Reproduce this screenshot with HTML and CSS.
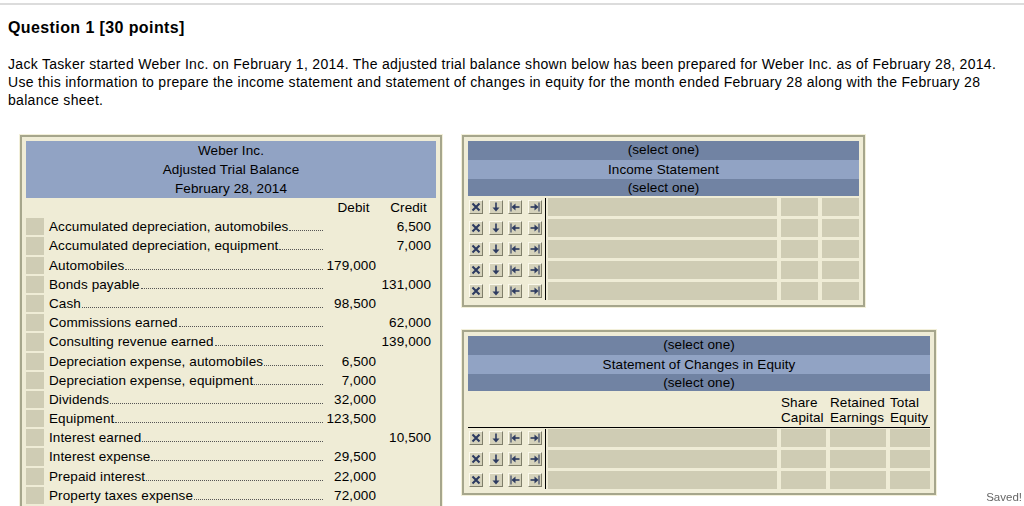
FILE: index.html
```html
<!DOCTYPE html>
<html lang="en">
<head>
<meta charset="utf-8">
<title>Question 1</title>
<link rel="stylesheet" href="styles.css">
</head>
<body>
<div class="topline"></div>
<main class="page">
  <h1 class="title">Question 1 [30 points]</h1>
  <p class="intro">Jack Tasker started Weber Inc. on February 1, 2014. The adjusted trial balance shown below has been prepared for Weber Inc. as of February 28, 2014. Use this information to prepare the income statement and statement of changes in equity for the month ended February 28 along with the February 28 balance sheet.</p>

  <div class="work">
    <section class="panel tb">
      <div class="tb-head">
        <div>Weber Inc.</div>
        <div>Adjusted Trial Balance</div>
        <div>February 28, 2014</div>
      </div>
      <div class="tb-grid">
        <div></div><div></div><div class="colh">Debit</div><div class="colh">Credit</div>

        <div class="box"></div><div class="lbl"><span>Accumulated depreciation, automobiles</span><span class="dots"></span></div><div class="num"></div><div class="num">6,500</div>
        <div class="box"></div><div class="lbl"><span>Accumulated depreciation, equipment</span><span class="dots"></span></div><div class="num"></div><div class="num">7,000</div>
        <div class="box"></div><div class="lbl"><span>Automobiles</span><span class="dots"></span></div><div class="num">179,000</div><div class="num"></div>
        <div class="box"></div><div class="lbl"><span>Bonds payable</span><span class="dots"></span></div><div class="num"></div><div class="num">131,000</div>
        <div class="box"></div><div class="lbl"><span>Cash</span><span class="dots"></span></div><div class="num">98,500</div><div class="num"></div>
        <div class="box"></div><div class="lbl"><span>Commissions earned</span><span class="dots"></span></div><div class="num"></div><div class="num">62,000</div>
        <div class="box"></div><div class="lbl"><span>Consulting revenue earned</span><span class="dots"></span></div><div class="num"></div><div class="num">139,000</div>
        <div class="box"></div><div class="lbl"><span>Depreciation expense, automobiles</span><span class="dots"></span></div><div class="num">6,500</div><div class="num"></div>
        <div class="box"></div><div class="lbl"><span>Depreciation expense, equipment</span><span class="dots"></span></div><div class="num">7,000</div><div class="num"></div>
        <div class="box"></div><div class="lbl"><span>Dividends</span><span class="dots"></span></div><div class="num">32,000</div><div class="num"></div>
        <div class="box"></div><div class="lbl"><span>Equipment</span><span class="dots"></span></div><div class="num">123,500</div><div class="num"></div>
        <div class="box"></div><div class="lbl"><span>Interest earned</span><span class="dots"></span></div><div class="num"></div><div class="num">10,500</div>
        <div class="box"></div><div class="lbl"><span>Interest expense</span><span class="dots"></span></div><div class="num">29,500</div><div class="num"></div>
        <div class="box"></div><div class="lbl"><span>Prepaid interest</span><span class="dots"></span></div><div class="num">22,000</div><div class="num"></div>
        <div class="box"></div><div class="lbl"><span>Property taxes expense</span><span class="dots"></span></div><div class="num">72,000</div><div class="num"></div>
      </div>
    </section>

    <div class="rightcol">
      <section class="panel is">
        <div class="sel">(select one)</div>
        <div class="ttl">Income Statement</div>
        <div class="sel last">(select one)</div>
        <div class="ent">
          <div class="btns">
            <div class="brow"><span class="b"><svg viewBox="0 0 12 12"><path d="M2.5 2.5L9.5 9.5M9.5 2.5L2.5 9.5" class="ln x"/></svg></span><span class="b"><svg viewBox="0 0 12 12"><path d="M6 1.5V7" class="ln"/><path d="M2.5 6.5H9.5L6 10.5Z" class="fl"/></svg></span><span class="b"><svg viewBox="0 0 12 12"><path d="M2 1.5V10.5" class="ln bar"/><path d="M6 6H10.5" class="ln"/><path d="M2.5 6L6.5 2.5V9.5Z" class="fl"/></svg></span><span class="b"><svg viewBox="0 0 12 12"><path d="M10 1.5V10.5" class="ln bar"/><path d="M1.5 6H6" class="ln"/><path d="M9.5 6L5.5 2.5V9.5Z" class="fl"/></svg></span></div>
            <div class="brow"><span class="b"><svg viewBox="0 0 12 12"><path d="M2.5 2.5L9.5 9.5M9.5 2.5L2.5 9.5" class="ln x"/></svg></span><span class="b"><svg viewBox="0 0 12 12"><path d="M6 1.5V7" class="ln"/><path d="M2.5 6.5H9.5L6 10.5Z" class="fl"/></svg></span><span class="b"><svg viewBox="0 0 12 12"><path d="M2 1.5V10.5" class="ln bar"/><path d="M6 6H10.5" class="ln"/><path d="M2.5 6L6.5 2.5V9.5Z" class="fl"/></svg></span><span class="b"><svg viewBox="0 0 12 12"><path d="M10 1.5V10.5" class="ln bar"/><path d="M1.5 6H6" class="ln"/><path d="M9.5 6L5.5 2.5V9.5Z" class="fl"/></svg></span></div>
            <div class="brow"><span class="b"><svg viewBox="0 0 12 12"><path d="M2.5 2.5L9.5 9.5M9.5 2.5L2.5 9.5" class="ln x"/></svg></span><span class="b"><svg viewBox="0 0 12 12"><path d="M6 1.5V7" class="ln"/><path d="M2.5 6.5H9.5L6 10.5Z" class="fl"/></svg></span><span class="b"><svg viewBox="0 0 12 12"><path d="M2 1.5V10.5" class="ln bar"/><path d="M6 6H10.5" class="ln"/><path d="M2.5 6L6.5 2.5V9.5Z" class="fl"/></svg></span><span class="b"><svg viewBox="0 0 12 12"><path d="M10 1.5V10.5" class="ln bar"/><path d="M1.5 6H6" class="ln"/><path d="M9.5 6L5.5 2.5V9.5Z" class="fl"/></svg></span></div>
            <div class="brow"><span class="b"><svg viewBox="0 0 12 12"><path d="M2.5 2.5L9.5 9.5M9.5 2.5L2.5 9.5" class="ln x"/></svg></span><span class="b"><svg viewBox="0 0 12 12"><path d="M6 1.5V7" class="ln"/><path d="M2.5 6.5H9.5L6 10.5Z" class="fl"/></svg></span><span class="b"><svg viewBox="0 0 12 12"><path d="M2 1.5V10.5" class="ln bar"/><path d="M6 6H10.5" class="ln"/><path d="M2.5 6L6.5 2.5V9.5Z" class="fl"/></svg></span><span class="b"><svg viewBox="0 0 12 12"><path d="M10 1.5V10.5" class="ln bar"/><path d="M1.5 6H6" class="ln"/><path d="M9.5 6L5.5 2.5V9.5Z" class="fl"/></svg></span></div>
            <div class="brow"><span class="b"><svg viewBox="0 0 12 12"><path d="M2.5 2.5L9.5 9.5M9.5 2.5L2.5 9.5" class="ln x"/></svg></span><span class="b"><svg viewBox="0 0 12 12"><path d="M6 1.5V7" class="ln"/><path d="M2.5 6.5H9.5L6 10.5Z" class="fl"/></svg></span><span class="b"><svg viewBox="0 0 12 12"><path d="M2 1.5V10.5" class="ln bar"/><path d="M6 6H10.5" class="ln"/><path d="M2.5 6L6.5 2.5V9.5Z" class="fl"/></svg></span><span class="b"><svg viewBox="0 0 12 12"><path d="M10 1.5V10.5" class="ln bar"/><path d="M1.5 6H6" class="ln"/><path d="M9.5 6L5.5 2.5V9.5Z" class="fl"/></svg></span></div>
          </div>
          <div class="fields is-cols">
            <div class="fld"></div><div class="fld"></div><div class="fld"></div>
            <div class="fld"></div><div class="fld"></div><div class="fld"></div>
            <div class="fld"></div><div class="fld"></div><div class="fld"></div>
            <div class="fld"></div><div class="fld"></div><div class="fld"></div>
            <div class="fld"></div><div class="fld"></div><div class="fld"></div>
          </div>
        </div>
      </section>

      <section class="panel sce">
        <div class="sel">(select one)</div>
        <div class="ttl">Statement of Changes in Equity</div>
        <div class="sel last">(select one)</div>
        <div class="colhead sce-cols">
          <div></div>
          <div>Share<br>Capital</div>
          <div>Retained<br>Earnings</div>
          <div>Total<br>Equity</div>
        </div>
        <div class="ent ent-tight">
          <div class="btns">
            <div class="brow"><span class="b"><svg viewBox="0 0 12 12"><path d="M2.5 2.5L9.5 9.5M9.5 2.5L2.5 9.5" class="ln x"/></svg></span><span class="b"><svg viewBox="0 0 12 12"><path d="M6 1.5V7" class="ln"/><path d="M2.5 6.5H9.5L6 10.5Z" class="fl"/></svg></span><span class="b"><svg viewBox="0 0 12 12"><path d="M2 1.5V10.5" class="ln bar"/><path d="M6 6H10.5" class="ln"/><path d="M2.5 6L6.5 2.5V9.5Z" class="fl"/></svg></span><span class="b"><svg viewBox="0 0 12 12"><path d="M10 1.5V10.5" class="ln bar"/><path d="M1.5 6H6" class="ln"/><path d="M9.5 6L5.5 2.5V9.5Z" class="fl"/></svg></span></div>
            <div class="brow"><span class="b"><svg viewBox="0 0 12 12"><path d="M2.5 2.5L9.5 9.5M9.5 2.5L2.5 9.5" class="ln x"/></svg></span><span class="b"><svg viewBox="0 0 12 12"><path d="M6 1.5V7" class="ln"/><path d="M2.5 6.5H9.5L6 10.5Z" class="fl"/></svg></span><span class="b"><svg viewBox="0 0 12 12"><path d="M2 1.5V10.5" class="ln bar"/><path d="M6 6H10.5" class="ln"/><path d="M2.5 6L6.5 2.5V9.5Z" class="fl"/></svg></span><span class="b"><svg viewBox="0 0 12 12"><path d="M10 1.5V10.5" class="ln bar"/><path d="M1.5 6H6" class="ln"/><path d="M9.5 6L5.5 2.5V9.5Z" class="fl"/></svg></span></div>
            <div class="brow"><span class="b"><svg viewBox="0 0 12 12"><path d="M2.5 2.5L9.5 9.5M9.5 2.5L2.5 9.5" class="ln x"/></svg></span><span class="b"><svg viewBox="0 0 12 12"><path d="M6 1.5V7" class="ln"/><path d="M2.5 6.5H9.5L6 10.5Z" class="fl"/></svg></span><span class="b"><svg viewBox="0 0 12 12"><path d="M2 1.5V10.5" class="ln bar"/><path d="M6 6H10.5" class="ln"/><path d="M2.5 6L6.5 2.5V9.5Z" class="fl"/></svg></span><span class="b"><svg viewBox="0 0 12 12"><path d="M10 1.5V10.5" class="ln bar"/><path d="M1.5 6H6" class="ln"/><path d="M9.5 6L5.5 2.5V9.5Z" class="fl"/></svg></span></div>
          </div>
          <div class="fields sce-cols">
            <div class="fld"></div><div class="fld"></div><div class="fld"></div><div class="fld"></div>
            <div class="fld"></div><div class="fld"></div><div class="fld"></div><div class="fld"></div>
            <div class="fld"></div><div class="fld"></div><div class="fld"></div><div class="fld"></div>
          </div>
        </div>
      </section>
    </div>
  </div>
</main>
<div class="saved">Saved!</div>
</body>
</html>
```

FILE: styles.css
```css
* { box-sizing: border-box; }

html, body { margin: 0; background: #fff; }

body {
  font-family: "Liberation Sans", Arial, sans-serif;
  color: #000;
}

.topline {
  margin-top: 3px;
  height: 2px;
  background: #dcdcdc;
}

.page { padding: 0 8px; }

.title {
  margin: 13px 0 0;
  font-size: 16px;
  line-height: 20px;
  font-weight: bold;
  letter-spacing: 0.4px;
}

.intro {
  margin: 17px 0 0;
  font-size: 14px;
  line-height: 18px;
  letter-spacing: 0.3px;
}

.work {
  margin-top: 26px;
  padding-left: 12px;
  display: flex;
  align-items: flex-start;
  gap: 20px;
  font-size: 13.5px;
  letter-spacing: 0.1px;
}

.panel {
  background: #efecd6;
  border: 2px solid #a6a68c;
  box-shadow: 0 0 0 1px #f3f0da;
  padding: 4px;
}

/* trial balance */
.tb { width: 422px; }

.tb-head {
  background: #91a3c4;
  text-align: center;
  line-height: 19px;
}

.tb-grid {
  display: grid;
  grid-template-columns: 18px 1fr 55px 55px;
  grid-auto-rows: 19.2px;
  line-height: 19.2px;
}

.colh { text-align: center; }

.box {
  background: #cfccb4;
  margin: 1px 0;
}

.lbl {
  display: flex;
  align-items: baseline;
  padding: 0 3px 0 5px;
  white-space: nowrap;
}

.dots {
  flex: 1;
  margin-left: 1px;
  border-bottom: 1px dotted #555;
}

.num {
  text-align: right;
  padding-right: 5px;
}

/* statements */
.rightcol {
  display: flex;
  flex-direction: column;
}

.is { width: 403px; padding-bottom: 5px; }
.sce { width: 474px; margin-top: 23px; }

.sel {
  background: #7183a3;
  text-align: center;
  height: 19px;
  line-height: 17px;
}

.sel.last { height: 17px; }

.ttl {
  background: #91a3c4;
  text-align: center;
  height: 19px;
  line-height: 19px;
}

.ent {
  display: flex;
  margin-top: 2px;
}

.ent-tight { margin-top: 1px; }

.btns {
  width: 78px;
  border-right: 1px solid #000;
  padding-left: 1px;
  display: grid;
  grid-auto-rows: 18px;
  row-gap: 3px;
}

.brow {
  display: flex;
  align-items: center;
  gap: 5.5px;
}

.b {
  width: 14px;
  height: 14px;
  background: #d5d2bb;
  border: 1px solid;
  border-color: #fbf9ec #7f7e6a #7f7e6a #fbf9ec;
  display: flex;
  align-items: center;
  justify-content: center;
}

.b svg { width: 12px; height: 12px; display: block; }
.b .ln { stroke: #2c3a60; stroke-width: 1.6; fill: none; }
.b .ln.x { stroke-width: 2.1; }
.b .ln.bar { stroke-width: 1.1; }
.b .fl { fill: #2c3a60; }

.fields {
  flex: 1;
  padding-left: 2px;
  display: grid;
  column-gap: 4px;
  row-gap: 3px;
  grid-auto-rows: 18px;
}

.is-cols { grid-template-columns: 229px 37px 1fr; }
.sce-cols { grid-template-columns: 229px 45px 56px 1fr; }

.fld { background: #cfccb4; }

.colhead {
  display: grid;
  column-gap: 4px;
  padding: 4px 0 2px 80px;
  line-height: 15px;
  border-bottom: 1px solid #000;
}

.saved {
  position: fixed;
  right: 2px;
  bottom: 3px;
  font-size: 11.5px;
  color: #666;
}
```
